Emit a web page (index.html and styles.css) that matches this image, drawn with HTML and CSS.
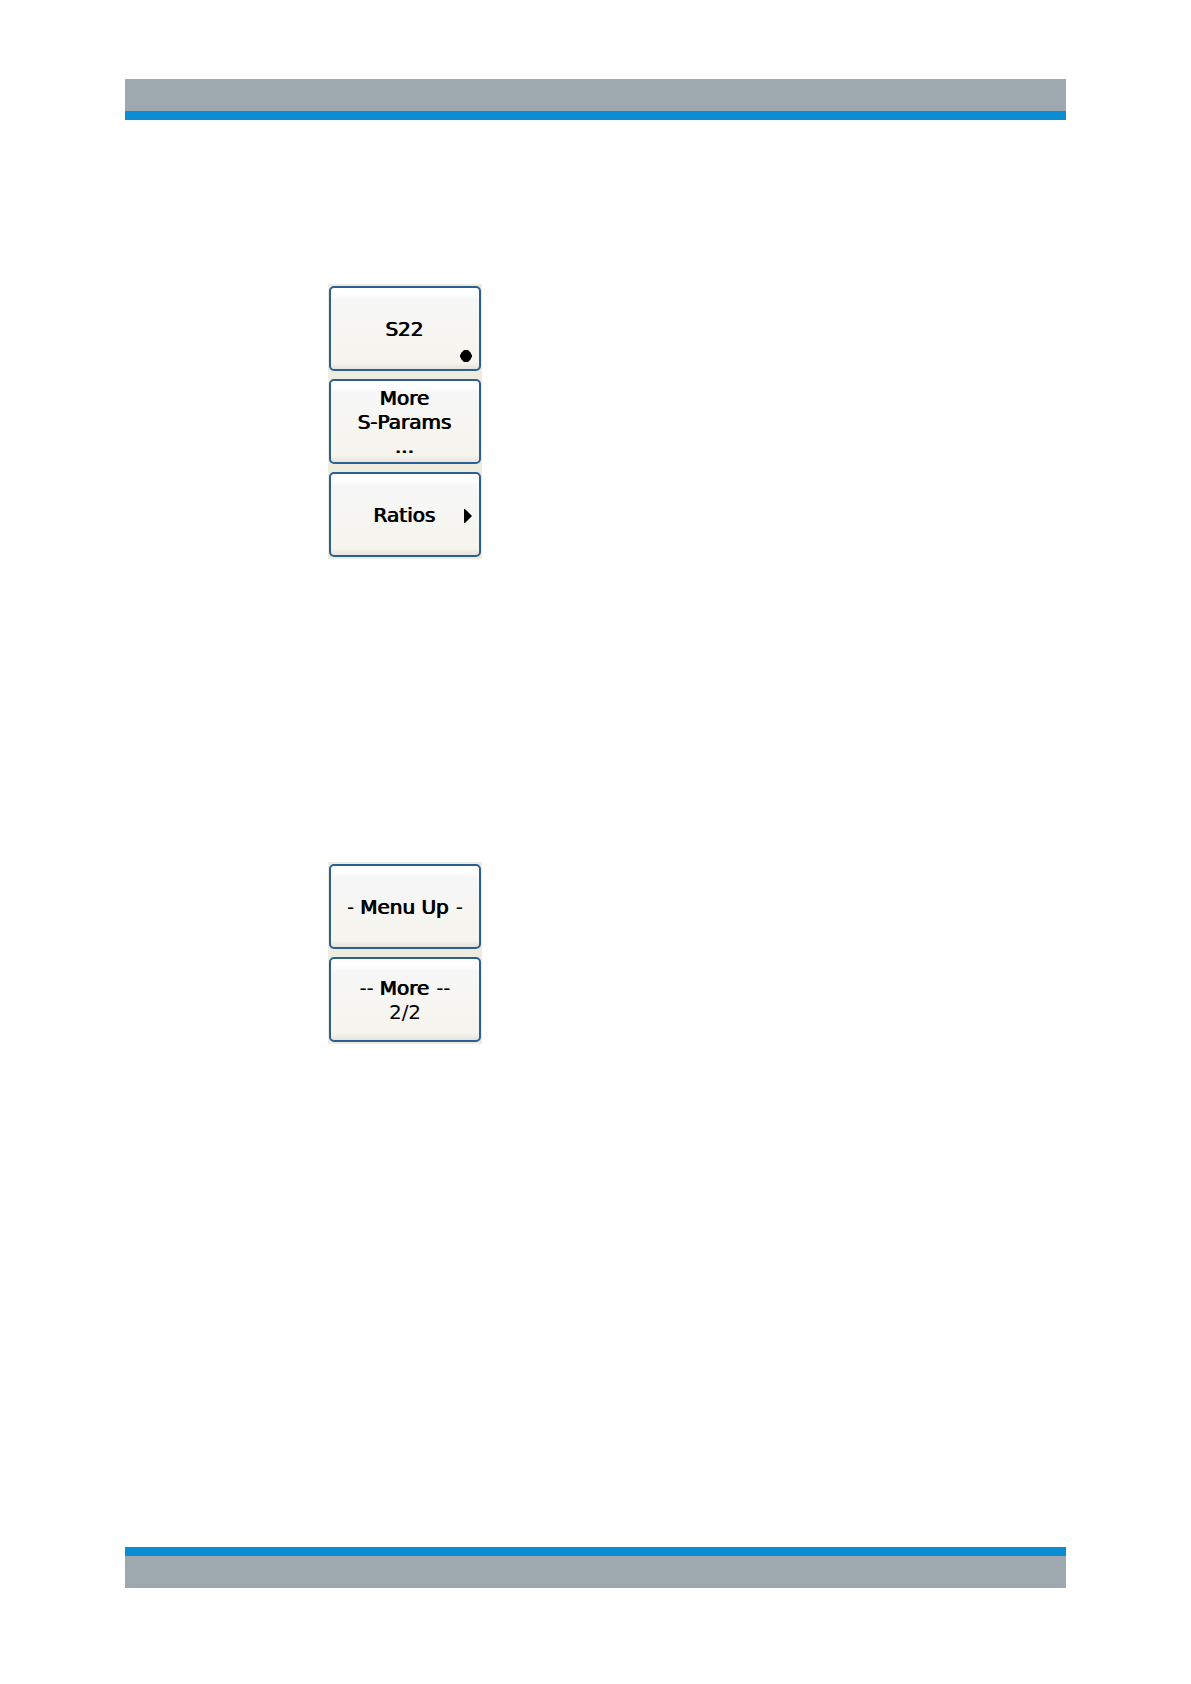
FILE: index.html
```html
<!DOCTYPE html>
<html lang="en">
<head>
  <meta charset="UTF-8" />
  <meta name="viewport" content="width=device-width, initial-scale=1.0"/>
  <title>S-Params Softkeys</title>
  <link rel="stylesheet" href="styles.css">
</head>
<body>
  <header class="band band-top"></header>

  <main>
    <div class="softkeys">
      <button type="button">
        <span>S22</span>
        <svg class="mark mark-dot" width="12" height="12" viewBox="0 0 12 12" aria-hidden="true">
          <path d="M4 0h4l3 3v1l1 1v2l-1 1v1l-3 3H4L1 9V8L0 7V5l1-1V3z"/>
        </svg>
      </button>
      <button type="button">
        <span>More<br>S-Params<br>...</span>
      </button>
      <button type="button">
        <span>Ratios</span>
        <svg class="mark mark-arrow" width="8" height="14" viewBox="0 0 8 14" aria-hidden="true">
          <path d="M0 0h1l7 7-7 7H0z"/>
        </svg>
      </button>
    </div>

    <div class="softkeys">
      <button type="button">
        <span><span class="thin">-</span> Menu Up <span class="thin">-</span></span>
      </button>
      <button type="button">
        <span><span class="thin">--</span> More <span class="thin">--</span><br><span class="thin">2/2</span></span>
      </button>
    </div>
  </main>

  <footer class="band band-bottom"></footer>
</body>
</html>
```

FILE: styles.css
```css
:root {
  --grey: #9ea9af;
  --blue: #0b8dd3;
  --key-border: #2c5f94;
  --panel: #eeecdf;
}

body {
  margin: 0;
  min-height: 100vh;
  box-sizing: border-box;
  padding: 79px 125px 96px;
  display: flex;
  flex-direction: column;
  font-family: "DejaVu Sans", sans-serif;
  background-color: #fff;
  color: #000;
}

.band {
  height: 32px;
  background-color: var(--grey);
}

.band-top {
  border-bottom: 9px solid var(--blue);
}

.band-bottom {
  border-top: 9px solid var(--blue);
}

main {
  flex: 1;
  display: flex;
  flex-direction: column;
  align-items: flex-start;
  gap: 303px;
  padding: 164px 0 0 203px;
}

/* softkey column, the panel colour shows between the keys */
.softkeys {
  display: grid;
  gap: 8px;
  padding: 2px 1px;
  background-color: var(--panel);
}

.softkeys button {
  position: relative;
  width: 152px;
  height: 85px;
  padding: 0;
  border: 2px solid var(--key-border);
  border-radius: 5px;
  background: linear-gradient(#fff 0%, #fff 8%, #f7f7f8 14%, #f5f4ed 92%, #e6e3da 100%);
  color: #000;
  font-family: inherit;
  font-size: 20px;
  line-height: 24px;
  text-shadow: -1px 0 0 #000;
  cursor: pointer;
}

.softkeys .thin {
  text-shadow: none;
}

.mark {
  position: absolute;
}

.mark-dot {
  right: 7px;
  bottom: 7px;
}

.mark-arrow {
  right: 7px;
  top: 35px;
}
```
